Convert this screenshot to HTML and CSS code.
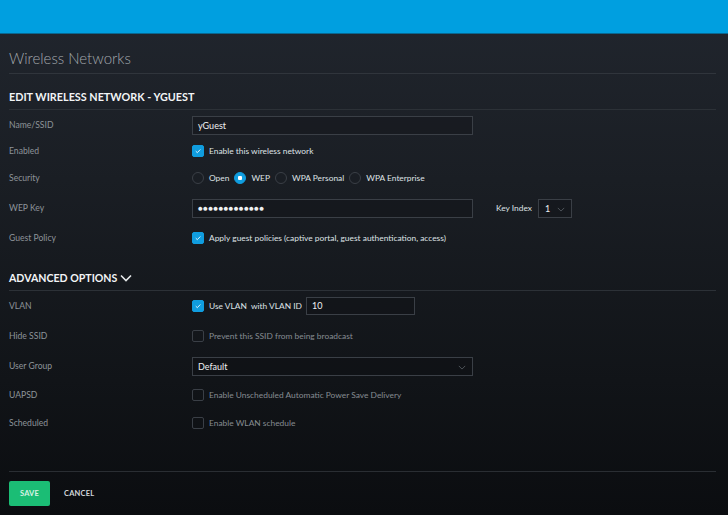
FILE: index.html
```html
<!DOCTYPE html>
<html>
<head>
<meta charset="utf-8">
<link rel="stylesheet" href="styles.css">
</head>
<body>
<div class="topbar"></div>
<div class="page">
  <h1 class="title">Wireless Networks</h1>
  <h2 class="section">EDIT WIRELESS NETWORK - YGUEST</h2>
  <div class="form">
    <div class="row r1">
      <div class="label">Name/SSID</div>
      <div class="ctrl"><div class="input wide">yGuest</div></div>
    </div>
    <div class="row r2">
      <div class="label">Enabled</div>
      <div class="ctrl"><span class="cb on"><svg viewBox="0 0 12 12"><path d="M3.3 6.2 L5.2 8 L8.8 4.2" fill="none" stroke="#fff" stroke-width="1"/></svg></span><span class="txt">Enable this wireless network</span></div>
    </div>
    <div class="row r3">
      <div class="label">Security</div>
      <div class="ctrl radios">
        <span class="rd"></span><span class="txt">Open</span>
        <span class="rd on"></span><span class="txt">WEP</span>
        <span class="rd"></span><span class="txt">WPA Personal</span>
        <span class="rd"></span><span class="txt">WPA Enterprise</span>
      </div>
    </div>
    <div class="row r4">
      <div class="label">WEP Key</div>
      <div class="ctrl"><div class="input wide dots">&#9679;&#9679;&#9679;&#9679;&#9679;&#9679;&#9679;&#9679;&#9679;&#9679;&#9679;&#9679;&#9679;</div>
        <span class="txt keyidx">Key Index</span>
        <div class="input sel small">1<svg class="chev" viewBox="0 0 10 6"><path d="M1 1 L5 5 L9 1" fill="none" stroke="#5d636a" stroke-width="1"/></svg></div>
      </div>
    </div>
    <div class="row r5">
      <div class="label">Guest Policy</div>
      <div class="ctrl"><span class="cb on"><svg viewBox="0 0 12 12"><path d="M3.3 6.2 L5.2 8 L8.8 4.2" fill="none" stroke="#fff" stroke-width="1"/></svg></span><span class="txt">Apply guest policies (captive portal, guest authentication, access)</span></div>
    </div>
  </div>
  <h2 class="section adv">ADVANCED OPTIONS <svg class="advchev" viewBox="0 0 12 8"><path d="M1 1.5 L6 6.5 L11 1.5" fill="none" stroke="#e6e8ea" stroke-width="1.6"/></svg></h2>
  <div class="form">
    <div class="row a1">
      <div class="label">VLAN</div>
      <div class="ctrl"><span class="cb on"><svg viewBox="0 0 12 12"><path d="M3.3 6.2 L5.2 8 L8.8 4.2" fill="none" stroke="#fff" stroke-width="1"/></svg></span><span class="txt">Use VLAN</span><span class="txt vid">with VLAN ID</span><div class="input vlan">10</div></div>
    </div>
    <div class="row a2">
      <div class="label">Hide SSID</div>
      <div class="ctrl"><span class="cb"></span><span class="txt dim">Prevent this SSID from being broadcast</span></div>
    </div>
    <div class="row a3">
      <div class="label">User Group</div>
      <div class="ctrl"><div class="input wide sel">Default<svg class="chev" viewBox="0 0 10 6"><path d="M1 1 L5 5 L9 1" fill="none" stroke="#5d636a" stroke-width="1"/></svg></div></div>
    </div>
    <div class="row a4">
      <div class="label">UAPSD</div>
      <div class="ctrl"><span class="cb"></span><span class="txt dim">Enable Unscheduled Automatic Power Save Delivery</span></div>
    </div>
    <div class="row a5">
      <div class="label">Scheduled</div>
      <div class="ctrl"><span class="cb"></span><span class="txt dim">Enable WLAN schedule</span></div>
    </div>
  </div>
  <div class="footer">
    <button class="btn save">SAVE</button>
    <button class="btn cancel">CANCEL</button>
  </div>
</div>
</body>
</html>
```
FILE: styles.css
```css
* { box-sizing: border-box; }
html, body { margin: 0; padding: 0; }
body {
  width: 728px;
  height: 515px;
  overflow: hidden;
  font-family: Lato, "Open Sans", sans-serif;
  background: linear-gradient(to bottom, #21262e 0px, #1a1e24 180px, #111418 380px, #0b0d10 515px);
  color: #e2e5e8;
}
.topbar {
  height: 34px;
  background: #009fe0;
  border-bottom: 1px solid #0a6790;
}
.page {
  padding: 0 12px 0 9px;
}
.title {
  margin: 0;
  height: 40px;
  padding-top: 14px;
  font-size: 15px;
  line-height: 20px;
  font-weight: 300;
  color: #a3a8ad;
  border-bottom: 1px solid #30353c;
}
.section {
  margin: 0;
  padding-top: 16px;
  height: 36px;
  font-size: 10.8px;
  line-height: 13px;
  font-weight: 700;
  color: #f2f4f6;
  border-bottom: 1px solid #2c3137;
}
.section.adv {
  padding-top: 17px;
  height: 37px;
  font-size: 10.6px;
  line-height: 14px;
  display: flex;
  align-items: flex-start;
}
.advchev {
  width: 12px;
  height: 8px;
  margin-left: 3px;
  margin-top: 3px;
}
.row {
  display: flex;
  align-items: center;
}
.r1 { height: 30px; }
.r2 { height: 22px; }
.r3 { height: 32px; }
.r4 { height: 28px; }
.r5 { height: 32px; }
.a1 { height: 29px; }
.a2 { height: 31px; }
.a3 { height: 30px; }
.a4 { height: 28px; }
.a5 { height: 27px; }
.label {
  width: 183px;
  font-size: 8.6px;
  color: #8d9399;
}
.ctrl {
  display: flex;
  align-items: center;
  font-size: 8.4px;
}
.txt {
  color: #dfe2e5;
  white-space: nowrap;
}
.txt.dim { color: #868c92; }
.cb {
  width: 12px;
  height: 12px;
  border: 1px solid #3a3f46;
  border-radius: 2px;
  margin-right: 5px;
  flex: none;
  display: block;
}
.cb.on {
  background: #109ddf;
  border-color: #109ddf;
}
.cb svg { display: block; width: 10px; height: 10px; }
.rd {
  width: 12px;
  height: 12px;
  border: 1px solid #3a3f46;
  border-radius: 50%;
  margin-right: 5px;
  flex: none;
  position: relative;
}
.rd.on {
  background: #109ddf;
  border-color: #109ddf;
}
.rd.on::after {
  content: "";
  position: absolute;
  left: 3px;
  top: 3px;
  width: 4px;
  height: 4px;
  background: #fff;
  border-radius: 1px;
}
.radios .txt { margin-right: 5px; }
.input {
  height: 19px;
  border: 1px solid #3a3f46;
  background: rgba(10, 12, 15, 0.25);
  color: #eef0f2;
  font-size: 9px;
  line-height: 17px;
  padding-left: 5px;
  position: relative;
}
.input.wide { width: 281px; }
.dots { font-size: 8px; letter-spacing: 0.3px; padding-left: 5px; }
.keyidx { margin-left: 23px; margin-right: 6px; }
.input.small { width: 34px; padding-left: 6px; }
.chev {
  position: absolute;
  right: 6px;
  top: 7px;
  width: 8px;
  height: 5px;
}
.vid { margin-left: 4px; margin-right: 4px; }
.input.vlan { width: 109px; height: 18px; line-height: 16px; }
.footer {
  margin-top: 35px;
  border-top: 1px solid #2a2e33;
  padding-top: 9px;
  display: flex;
  align-items: center;
}
.btn {
  font-family: Lato, "Open Sans", sans-serif;
  font-weight: 700;
  font-size: 7.5px;
  border: none;
  padding: 0;
  background: none;
  letter-spacing: 0.2px;
}
.btn.save {
  width: 41px;
  height: 25px;
  background: #1bbd75;
  color: #d7f2e4;
  border-radius: 2px;
}
.btn.cancel {
  margin-left: 14px;
  color: #d3d7db;
}
```
